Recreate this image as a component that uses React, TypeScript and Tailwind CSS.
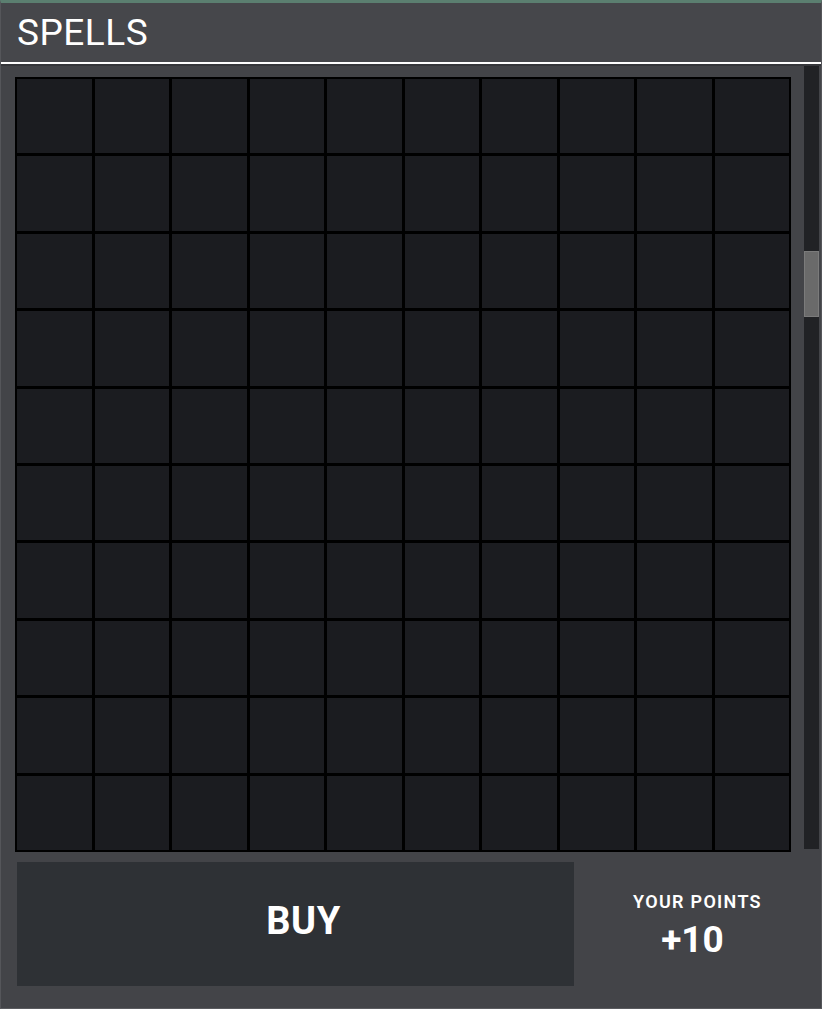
import React from 'react';

// 10 x 10 spell slots, all empty for now
const slots = Array.from({ length: 100 }, (_, i) => i);

const SpellSlot: React.FC = () => (
  <div className="h-[76.4px] border border-black bg-[#1b1c20]" />
);

const App: React.FC = () => {
  return (
    <div
      className="w-[822px] h-[1009px] flex flex-col bg-[#434448] border-t-[3px] border-t-[#5b7f70] border-x border-b border-x-[#55565a] border-b-[#5a5b5f] text-white"
      style={{ fontFamily: 'Roboto, "Noto Sans", sans-serif' }}
    >
      {/* Header */}
      <div className="h-[59px] shrink-0 flex items-center px-[16px] bg-[#46474b]">
        <h1 className="text-[37px] leading-none tracking-[0.5px] font-normal">SPELLS</h1>
      </div>
      <div className="h-[2px] shrink-0 bg-white" />
      <div className="h-[2px] shrink-0 bg-[#36373b]" />

      {/* Spell grid + scrollbar */}
      <div className="flex shrink-0">
        <div className="pl-[14px] pt-[11px]">
          <div className="w-[776px] grid grid-cols-10 gap-px p-px bg-black">
            {slots.map((i) => (
              <SpellSlot key={i} />
            ))}
          </div>
        </div>
        <div className="ml-[13px] w-[15px] h-[783px] bg-[#212225]">
          <div className="mt-[185px] h-[66px] bg-[#6a6a6a] border border-[#7b7b7b]" />
        </div>
      </div>

      {/* Buy + points */}
      <div className="flex mt-[10px] pl-[16px]">
        <button className="w-[557px] h-[124px] bg-[#2e3135] flex items-center justify-center pl-[16px] pb-[5px] text-[38px] font-bold tracking-[0.5px]">
          BUY
        </button>
        <div className="flex-1 flex flex-col items-center justify-center pt-[3px]">
          <span className="text-[18px] font-semibold leading-none tracking-[1.3px]">YOUR POINTS</span>
          <span className="mt-[10px] pr-[10px] text-[37px] font-bold leading-none">+10</span>
        </div>
      </div>
    </div>
  );
};

export default App;
